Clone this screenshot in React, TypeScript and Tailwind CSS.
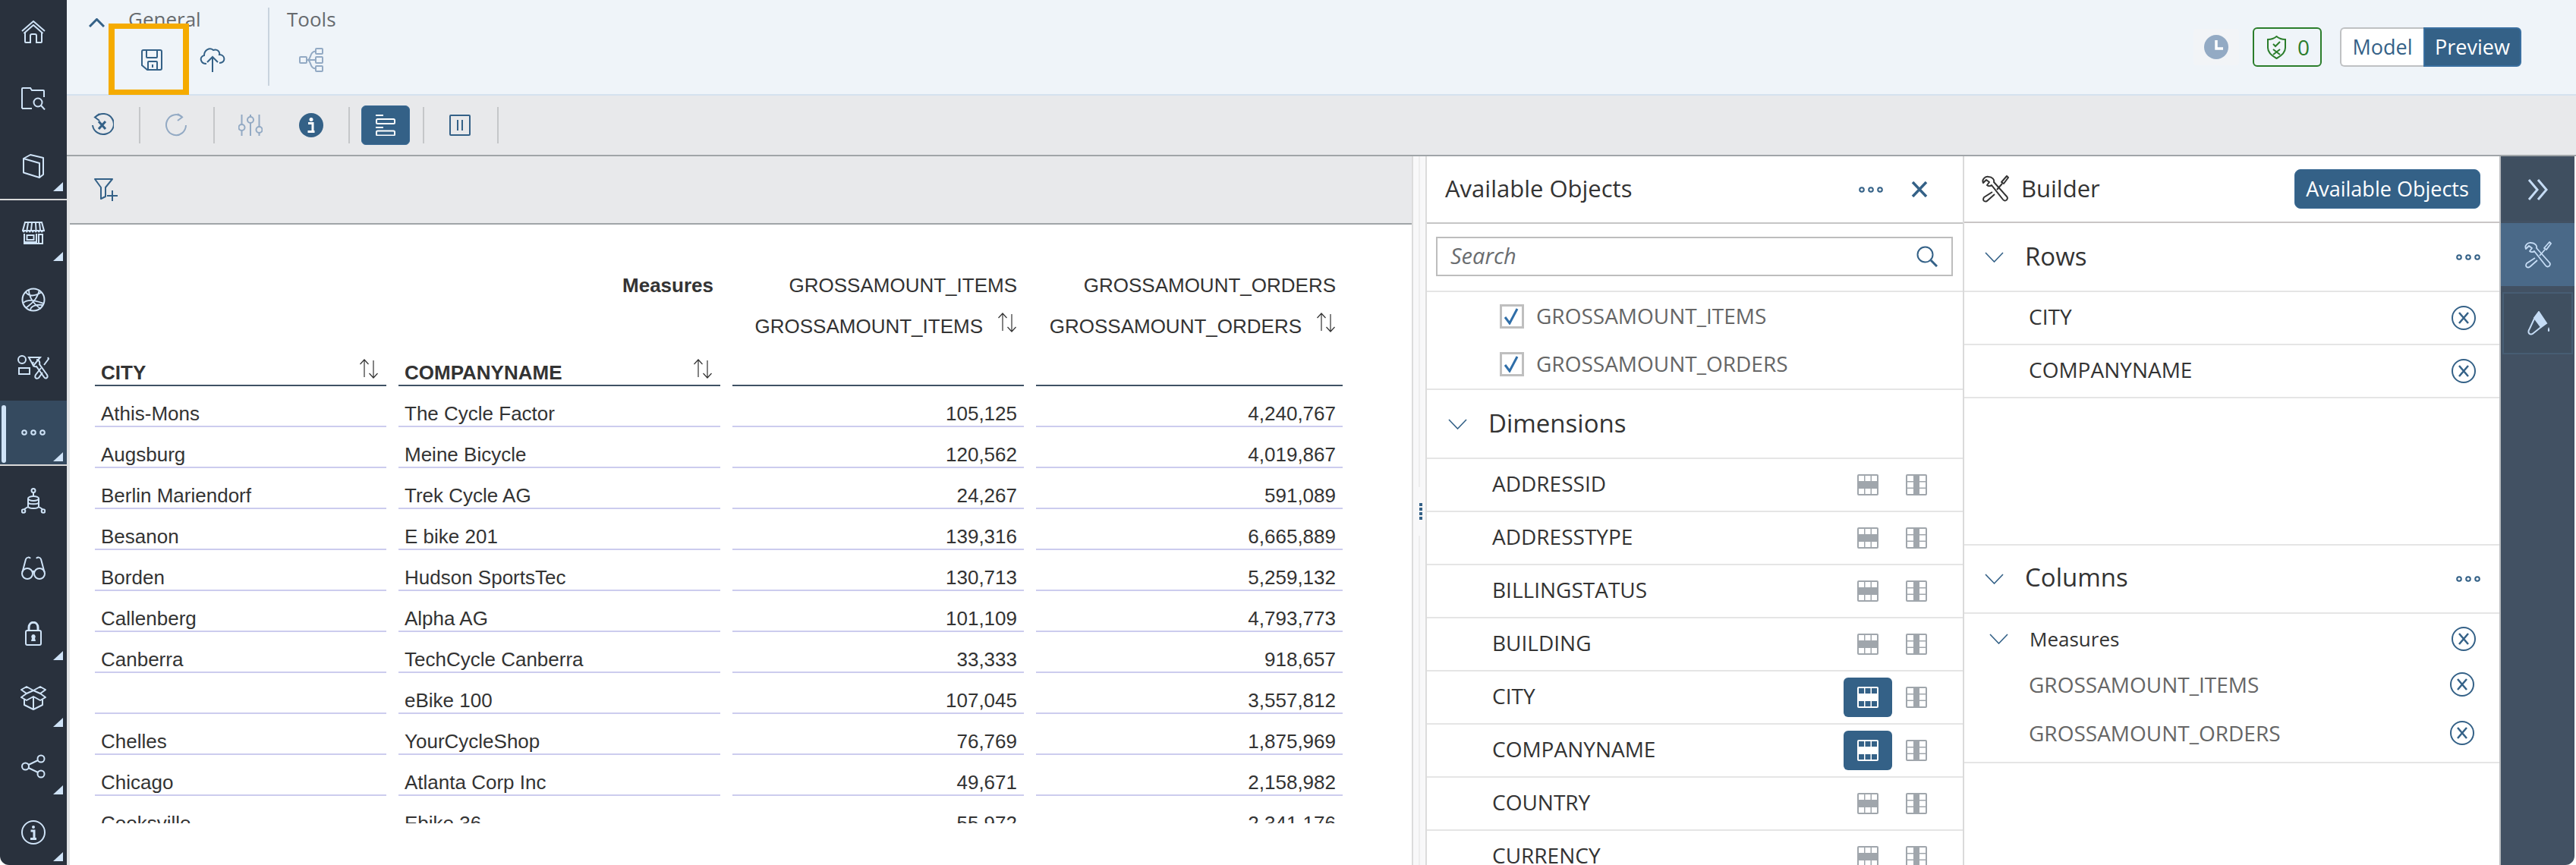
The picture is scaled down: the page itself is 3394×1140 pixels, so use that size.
import React from "react";

type P = { className?: string };

const Svg = ({ w, h, vb, className, children, sw = 2 }: { w: number; h: number; vb?: string; className?: string; children: React.ReactNode; sw?: number }) => (
  <svg width={w} height={h} viewBox={vb ?? `0 0 ${w} ${h}`} fill="none" stroke="currentColor" strokeWidth={sw} className={className}>
    {children}
  </svg>
);

const HomeI = () => (
  <Svg w={32} h={30}>
    <path d="M1 14 L16 1 L31 14 M3.500 17 L16 6 L28.500 17" strokeLinejoin="round" />
    <path d="M5 16 V28 Q5 29 6 29 H12 V20 Q12 18 14 18 H18 Q20 18 20 20 V29 H26 Q27 29 27 28 V16" />
  </Svg>
);
const FolderI = () => (
  <Svg w={32} h={30}>
    <path d="M1 28 V2 Q1 1 2 1 H12 L14 4 H29 Q30 4 30 5 V13 M1 28 H14" />
    <circle cx={22} cy={20} r={5.500} />
    <path d="M26 24 L31 29.500" />
  </Svg>
);
const BookI = () => (
  <Svg w={30} h={32}>
    <path d="M2 6 L23 12 V31 L2 24.500 Z" strokeLinejoin="round" />
    <path d="M2 6 L11 1 L28 5 V27 L23 31" strokeLinejoin="round" />
  </Svg>
);
const StoreI = () => (
  <Svg w={30} h={30}>
    <path d="M4 1 H26 L29 12 H1 Z" />
    <path d="M8 2 L6.500 11 M13 2 L12 11 M18 2 L18.500 11 M23 2 L24 11" />
    <path d="M1 13 H29" strokeDasharray="2.5 1.5" strokeWidth={2.500} />
    <path d="M3 16 V29 H27 V16 M3 27 H19 V16 M22 29 V17 H27" />
    <rect x={6.500} y={18} width={9} height={6} />
  </Svg>
);
const GlobeI = () => (
  <Svg w={32} h={32}>
    <circle cx={16} cy={16} r={14.500} />
    <path d="M6 6 C10 12 17 12 27 6 M3 20 C10 14 20 18 30 21 M10 3 C10 12 16 22 26 28 M6 27 C12 22 20 18 24 3 M12 30 C12 24 20 22 29 23" strokeWidth={1.800} />
  </Svg>
);
const ShapesToolI = () => (
  <Svg w={42} h={32}>
    <circle cx={6} cy={6} r={5} />
    <path d="M15 3 H30 L21 14 Z" />
    <rect x={2} y={17} width={14} height={8} />
    <path d="M21 9 C19 13 22 16 25 15 L35 29 C37 32 41 30 39 26 L29 12 C30 9 28 6 25 6" />
    <path d="M40 3 L41 5 L35 13 M31 17 L24 26 C22 30 25 32 28 30 L33 23" />
  </Svg>
);
const DotsI = ({ className }: P) => (
  <Svg w={32} h={10} className={className} sw={2}>
    <circle cx={4} cy={5} r={2.800} />
    <circle cx={16} cy={5} r={2.800} />
    <circle cx={28} cy={5} r={2.800} />
  </Svg>
);
const NetDbI = () => (
  <Svg w={32} h={34}>
    <circle cx={16} cy={3.500} r={2.500} />
    <path d="M16 6 V11" />
    <ellipse cx={16} cy={14} rx={7} ry={3} />
    <path d="M9 14 V24 C9 28 23 28 23 24 V14 M9 19 C9 22 23 22 23 19" />
    <path d="M9 25 L4 28 M23 25 L28 28" />
    <circle cx={3} cy={30.500} r={2.300} />
    <circle cx={29} cy={30.500} r={2.300} />
  </Svg>
);
const GlassesI = () => (
  <Svg w={32} h={32}>
    <circle cx={8} cy={23} r={7} />
    <circle cx={24} cy={23} r={7} />
    <path d="M15 22 C15 19 17 19 17 22 M1.500 21 L6 4 C7 1 11 1 12 3 M30.500 21 L26 4 C25 1 21 1 20 3" />
  </Svg>
);
const LockI = () => (
  <Svg w={22} h={32}>
    <path d="M5 13 V8 C5 -1 17 -1 17 8 V13" strokeWidth={3} />
    <rect x={1} y={12} width={20} height={19} rx={2} />
    <path d="M11 17 a3 3 0 0 1 2 5 l1 4 h-6 l1 -4 a3 3 0 0 1 2 -5 Z" fill="currentColor" stroke="none" />
  </Svg>
);
const BoxI = () => (
  <Svg w={34} h={32}>
    <path d="M8 1 L17 6 L26 1 L33 5 L26 10 L17 6 L8 10 L1 5 Z" strokeLinejoin="round" />
    <path d="M8 10 L1 15 L8 19 L17 14 L26 19 L33 15 L26 10 M17 14 L17 31 M5 18 V25 L17 31 L29 25 V18" strokeLinejoin="round" />
  </Svg>
);
const ShareI = () => (
  <Svg w={32} h={32}>
    <circle cx={5.500} cy={16} r={4.500} />
    <circle cx={26} cy={6} r={4.500} />
    <circle cx={26} cy={26} r={4.500} />
    <path d="M9.500 14 L22 8 M9.500 18 L22 24" />
  </Svg>
);
const InfoRailI = () => (
  <Svg w={32} h={32}>
    <circle cx={16} cy={16} r={15} />
    <circle cx={16} cy={9} r={2} fill="currentColor" stroke="none" />
    <path d="M12.500 14 H17 V24 M12 24.500 H20" strokeWidth={3} />
  </Svg>
);

const railItems = [
  { icon: <HomeI />, h: "h-[84px]", border: false, tri: "" },
  { icon: <FolderI />, h: "h-[92px]", border: false, tri: "" },
  { icon: <BookI />, h: "h-[86px]", border: true, tri: "bottom-[10px]" },
  { icon: <StoreI />, h: "h-[86px]", border: false, tri: "bottom-[6px]" },
  { icon: <GlobeI />, h: "h-[90px]", border: false, tri: "" },
  { icon: <ShapesToolI />, h: "h-[88px]", border: false, tri: "" },
  { icon: <DotsI />, h: "h-[84px]", border: true, tri: "bottom-[4px]", active: true },
  { icon: <NetDbI />, h: "h-[91px]", border: false, tri: "" },
  { icon: <GlassesI />, h: "h-[87px]", border: false, tri: "" },
  { icon: <LockI />, h: "h-[86px]", border: false, tri: "bottom-[8px]" },
  { icon: <BoxI />, h: "h-[84px]", border: false, tri: "bottom-[4px]" },
  { icon: <ShareI />, h: "h-[95px]", border: false, tri: "bottom-[10px]" },
  { icon: <InfoRailI />, h: "h-[80px]", border: false, tri: "bottom-[2px]" },
];

const Tri = ({ pos }: { pos: string }) => (
  <svg width={13} height={12} viewBox="0 0 13 12" className={`absolute right-[5px] ${pos} text-[#cfe3f7]`}>
    <polygon points="13,0 13,12 0,12" fill="currentColor" />
  </svg>
);

const LeftRail = () => (
  <div className="w-[88px] h-[1140px] shrink-0 bg-[#29313d] rounded-bl-[12px] text-[#cfe3f7] flex flex-col overflow-hidden">
    {railItems.map((it, i) => (
      <div
        key={i}
        className={`${it.h} ${it.border ? "border-b-2 border-[#d9d9d9] box-content" : ""} ${it.active ? "bg-[#354a5f]" : ""} shrink-0 relative flex items-center justify-center`}
      >
        {it.active && <div className="absolute left-[2px] top-[6px] bottom-[2px] w-[6px] rounded-[3px] bg-[#cfe3f7]" />}
        {it.icon}
        {it.tri && <Tri pos={it.tri} />}
      </div>
    ))}
  </div>
);

const ChevronDown = ({ className }: P) => (
  <svg width={25} height={14} viewBox="0 0 25 14" fill="none" stroke="currentColor" strokeWidth={1.600} className={`text-[#346187] ${className ?? ""}`}>
    <path d="M1 1 L12.500 13 L24 1" />
  </svg>
);

const TopBar = () => (
  <div className="relative h-[126px] shrink-0 bg-[#eff4f9] border-b-2 border-[#d5e2ef] flex items-start pl-[29px]">
    <div className="w-[52px] pt-[24px] shrink-0">
      <svg width={21} height={12} viewBox="0 0 21 12" fill="none" stroke="currentColor" strokeWidth={3} className="text-[#346187]">
        <path d="M1 11 L10.500 1.500 L20 11" />
      </svg>
    </div>
    <div className="w-[184px] shrink-0 pt-[10px]">
      <div className="text-[26px] leading-[30px] text-[#666a6e]">General</div>
      <div className="mt-[23px] h-[32px] flex items-center text-[#346187]">
        <svg width={28} height={28} viewBox="0 0 28 28" fill="none" stroke="currentColor" strokeWidth={2} className="ml-[17px]">
          <path d="M3 1 H25 Q27 1 27 3 V25 Q27 27 25 27 H8 L1 21 V3 Q1 1 3 1 Z" />
          <path d="M7 1 V10 Q7 11 8 11 H20 Q21 11 21 10 V1" />
          <path d="M9 27 V17 Q9 16 10 16 H20 Q21 16 21 17 V27 M15 20 V24" />
        </svg>
        <svg width={34} height={32} viewBox="0 0 34 32" fill="none" stroke="currentColor" strokeWidth={2} className="ml-[49px]">
          <path d="M9 21 C1 21 -1 12 6 10 C6 3 13 -1 18 3 C23 1 27 5 26 9 C34 9 35 20 26 20" />
          <path d="M17 32 V12 M10 19 L17 12 L24 19" />
        </svg>
      </div>
    </div>
    <div className="w-[2px] h-[103px] mt-[10px] bg-[#c8d3de] shrink-0" />
    <div className="pl-[23px] pt-[10px]">
      <div className="text-[26px] leading-[30px] text-[#666a6e]">Tools</div>
      <div className="mt-[23px] h-[32px] flex items-center text-[#93aac4]">
        <svg width={32} height={32} viewBox="0 0 32 32" fill="none" stroke="currentColor" strokeWidth={2} className="ml-[16px]">
          <rect x={1} y={12} width={9} height={8} rx={1} />
          <rect x={22} y={1} width={9} height={7} rx={1} />
          <rect x={22} y={12} width={9} height={8} rx={1} />
          <rect x={22} y={24} width={9} height={7} rx={1} />
          <path d="M10 16 H22 M12 16 C16 14 14 5 22 4.500 M12 16 C16 18 14 27 22 27.500" />
        </svg>
      </div>
    </div>
    <div className="ml-auto h-[124px] pr-[72px] flex items-center">
      <div className="w-[60px] h-[48px] rounded-[4px] bg-[#f2f4f7] flex items-center justify-center">
        <svg width={32} height={32} viewBox="0 0 32 32">
          <circle cx={16} cy={16} r={16} fill="#93aac4" />
          <path d="M16 7 V18 H25" fill="none" stroke="#fff" strokeWidth={3.500} />
        </svg>
      </div>
      <div className="ml-[18px] w-[91px] h-[52px] rounded-[6px] border-2 border-[#2b7d2b] flex items-center pl-[17px] text-[#2b7d2b]">
        <svg width={25} height={31} viewBox="0 0 25 31" fill="none" stroke="currentColor" strokeWidth={2}>
          <path d="M12.500 1 C9 4 5 5 1 5 V16 C1 23 7 27 12.500 30 C18 27 24 23 24 16 V5 C20 5 16 4 12.500 1 Z" />
          <path d="M8 11 L11 14 L17 8 M8 18 L17 25 M17 18 L8 25" />
        </svg>
        <span className="ml-[15px] text-[28px] leading-none">0</span>
      </div>
      <div className="ml-[24px] flex h-[52px] text-[27px]">
        <div className="w-[110px] border-2 border-r-0 border-[#bfc1c3] rounded-l-[6px] bg-white text-[#346187] flex items-center justify-center">Model</div>
        <div className="w-[129px] border-2 border-[#3a6fa0] rounded-r-[6px] bg-[#346187] text-white flex items-center justify-center">Preview</div>
      </div>
    </div>
    <div className="absolute left-[55px] top-[31px] w-[106px] h-[94px] border-x-[8px] border-y-[7px] border-[#f5ab00]" />
  </div>
);

const Sep = ({ className }: P) => <div className={`w-[2px] h-[48px] bg-[#c5c7c9] shrink-0 ${className ?? ""}`} />;

const Toolbar = () => (
  <div className="h-[80px] shrink-0 bg-[#e8e9eb] border-b-2 border-[#a0a5a8] flex items-center pl-[32px] text-[#346187]">
    <svg width={30} height={32} viewBox="0 0 30 32" fill="none" stroke="currentColor" strokeWidth={2}>
      <path d="M6 5 A14 13.500 0 1 1 2 16" />
      <path d="M11 1 L5 5.500 L11 10" />
      <path d="M10 11 L19 21 M19 11 L10 21" strokeWidth={3} />
    </svg>
    <Sep className="ml-[33px]" />
    <svg width={28} height={32} viewBox="0 0 28 32" fill="none" stroke="currentColor" strokeWidth={2} className="ml-[33px] text-[#93aac4]">
      <path d="M22 5 A13 13.500 0 1 0 27 16" />
      <path d="M16 1 L22 5.500 L16 10" />
    </svg>
    <Sep className="ml-[35px]" />
    <svg width={32} height={28} viewBox="0 0 32 28" fill="none" stroke="currentColor" strokeWidth={2} className="ml-[31px] text-[#93aac4]">
      <path d="M4.500 0 V13 M4.500 21 V28 M16 0 V3 M16 11 V28 M27.500 0 V16 M27.500 24 V28" />
      <circle cx={4.500} cy={17} r={4} />
      <circle cx={16} cy={7} r={4} />
      <circle cx={27.500} cy={20} r={4} />
    </svg>
    <svg width={32} height={32} viewBox="0 0 32 32" className="ml-[48px]">
      <circle cx={16} cy={16} r={16} fill="#346187" />
      <circle cx={16} cy={8.500} r={2.500} fill="#fff" />
      <path d="M12 13.500 H18 V24 M11.500 24.500 H20.500" fill="none" stroke="#fff" strokeWidth={3} />
    </svg>
    <Sep className="ml-[33px]" />
    <div className="ml-[15px] w-[64px] h-[52px] rounded-[6px] bg-[#346187] border border-[#3a6a94] flex items-center justify-center text-white">
      <svg width={26} height={28} viewBox="0 0 26 28" fill="none" stroke="currentColor" strokeWidth={2}>
        <path d="M0 1 H10 M0 17 H10" />
        <rect x={1} y={6} width={24} height={6} rx={1.500} />
        <rect x={1} y={21.500} width={24} height={6} rx={1.500} />
      </svg>
    </div>
    <Sep className="ml-[17px]" />
    <svg width={28} height={28} viewBox="0 0 28 28" fill="none" stroke="currentColor" strokeWidth={2} className="ml-[33px]">
      <rect x={1} y={1} width={26} height={26} rx={1} />
      <path d="M11 7 V21 M17 7 V21" />
    </svg>
    <Sep className="ml-[35px]" />
  </div>
);

const Sort = ({ className }: P) => (
  <svg width={26} height={26} viewBox="0 0 26 26" fill="none" stroke="#333" strokeWidth={1.200} className={className}>
    <path d="M7 24 V1 M1.500 7 L7 1 L12.500 7" />
    <path d="M19 2 V25 M13.500 19 L19 25 L24.500 19" />
  </svg>
);

const data: [string, string, string, string][] = [
  ["Athis-Mons", "The Cycle Factor", "105,125", "4,240,767"],
  ["Augsburg", "Meine Bicycle", "120,562", "4,019,867"],
  ["Berlin Mariendorf", "Trek Cycle AG", "24,267", "591,089"],
  ["Besanon", "E bike 201", "139,316", "6,665,889"],
  ["Borden", "Hudson SportsTec", "130,713", "5,259,132"],
  ["Callenberg", "Alpha AG", "101,109", "4,793,773"],
  ["Canberra", "TechCycle Canberra", "33,333", "918,657"],
  ["", "eBike 100", "107,045", "3,557,812"],
  ["Chelles", "YourCycleShop", "76,769", "1,875,969"],
  ["Chicago", "Atlanta Corp Inc", "49,671", "2,158,982"],
  ["Cooksville", "Ebike 36", "55,972", "2,341,176"],
];

const Head = ({ children, className }: { children?: React.ReactNode; className?: string }) => (
  <div className={`h-[54px] flex items-end justify-end pr-[9px] ${className ?? ""}`}>{children}</div>
);

const Table = () => (
  <div className="h-[789px] overflow-hidden pt-[42px] pl-[33px] font-['Liberation_Sans',Arial,sans-serif] text-[26px] leading-[32px] text-[#333]">
    <div className="grid grid-cols-[384px_424px_384px_404px] gap-x-[16px]">
      <Head />
      <Head><span className="font-bold">Measures</span></Head>
      <Head>GROSSAMOUNT_ITEMS</Head>
      <Head>GROSSAMOUNT_ORDERS</Head>
      <Head />
      <Head />
      <Head>GROSSAMOUNT_ITEMS<Sort className="ml-[19px] mb-[8px]" /></Head>
      <Head>GROSSAMOUNT_ORDERS<Sort className="ml-[19px] mb-[8px]" /></Head>
      <div className="h-[63px] border-b-2 border-[#3f5164] flex items-end justify-between pl-[8px] pr-[10px] font-bold">
        CITY<Sort className="mb-[8px]" />
      </div>
      <div className="h-[63px] border-b-2 border-[#3f5164] flex items-end justify-between pl-[8px] pr-[10px] font-bold">
        COMPANYNAME<Sort className="mb-[8px]" />
      </div>
      <div className="h-[63px] border-b-2 border-[#3f5164]" />
      <div className="h-[63px] border-b-2 border-[#3f5164]" />
      {data.map((r, i) => (
        <React.Fragment key={i}>
          <div className="h-[54px] border-b-2 border-[#ccccee] flex items-end pl-[8px]">{r[0]}</div>
          <div className="h-[54px] border-b-2 border-[#ccccee] flex items-end pl-[8px]">{r[1]}</div>
          <div className="h-[54px] border-b-2 border-[#ccccee] flex items-end justify-end pr-[9px]">{r[2]}</div>
          <div className="h-[54px] border-b-2 border-[#ccccee] flex items-end justify-end pr-[9px]">{r[3]}</div>
        </React.Fragment>
      ))}
    </div>
  </div>
);

const Content = () => (
  <div className="w-[1768px] shrink-0 flex flex-col bg-white">
    <div className="h-[90px] shrink-0 bg-[#e8e9eb] border-b-2 border-[#a0a5a8] flex items-center pl-[32px] text-[#346187]">
      <svg width={32} height={30} viewBox="0 0 32 30" fill="none" stroke="currentColor" strokeWidth={2}>
        <path d="M1 1 H24 L15 12 V24 L9 27 V12 Z" strokeLinejoin="round" />
        <path d="M24 16 V30 M17 23 H31" />
      </svg>
    </div>
    <Table />
  </div>
);

const Splitter = () => (
  <div className="relative w-[20px] shrink-0 bg-[#f8f8f9] border-x-2 border-[#dcdcdc]">
    <div className="absolute left-[7px] top-0 bottom-0 w-[2px] bg-[#eeeeee]" />
    <div className="absolute left-0 right-0 top-[436px] h-[64px] bg-[#f8f8f9] flex flex-col items-center justify-center gap-[2px] pl-[4px]">
      {[0, 1, 2, 3].map((i) => (
        <div key={i} className="w-[4px] h-[4px] bg-[#346187]" />
      ))}
    </div>
  </div>
);

const GridRow = () => (
  <svg width={28} height={28} viewBox="0 0 28 28" className="text-[#a0a6ac]">
    <rect width={28} height={28} rx={2} fill="currentColor" />
    {[2, 10.5, 19].map((x) => (
      <React.Fragment key={x}>
        <rect x={x} y={2} width={7} height={7} fill="#fff" />
        <rect x={x} y={19} width={7} height={7} fill="#fff" />
      </React.Fragment>
    ))}
  </svg>
);
const GridRowActive = () => (
  <svg width={28} height={28} viewBox="0 0 28 28">
    <rect width={28} height={28} rx={2} fill="#fff" />
    {[2, 10.5, 19].map((x) => (
      <React.Fragment key={x}>
        <rect x={x} y={2} width={7} height={7} fill="#346187" />
        <rect x={x} y={19} width={7} height={7} fill="#346187" />
      </React.Fragment>
    ))}
  </svg>
);
const GridCol = () => (
  <svg width={28} height={28} viewBox="0 0 28 28" className="text-[#a0a6ac]">
    <rect width={28} height={28} rx={2} fill="currentColor" />
    {[2, 10.5, 19].map((y) => (
      <React.Fragment key={y}>
        <rect x={2} y={y} width={8} height={7} fill="#fff" />
        <rect x={18} y={y} width={8} height={7} fill="#fff" />
      </React.Fragment>
    ))}
  </svg>
);

const dims: [string, boolean][] = [
  ["ADDRESSID", false],
  ["ADDRESSTYPE", false],
  ["BILLINGSTATUS", false],
  ["BUILDING", false],
  ["CITY", true],
  ["COMPANYNAME", true],
  ["COUNTRY", false],
  ["CURRENCY", false],
];

const Check = ({ label }: { label: string }) => (
  <div className="h-[64px] flex items-center pl-[96px]">
    <div className="w-[32px] h-[32px] border-[3px] border-[#bfbfbf] bg-white flex items-center justify-center">
      <svg width={20} height={22} viewBox="0 0 20 22" fill="none" stroke="#2f6ea8" strokeWidth={3}>
        <path d="M1 12 L7 20 L17 1" />
      </svg>
    </div>
    <span className="ml-[16px] pb-[2px] text-[28px] text-[#666]">{label}</span>
  </div>
);

const Available = () => (
  <div className="w-[708px] shrink-0 border-r-2 border-[#dadada] bg-white overflow-hidden text-[28px] text-[#333]">
    <div className="h-[89px] border-b-2 border-[#c5c5c5] flex items-center pl-[24px]">
      <span className="text-[31px] pb-[2px]">Available Objects</span>
      <DotsI className="ml-auto text-[#346187]" />
      <svg width={22} height={21} viewBox="0 0 22 21" fill="none" stroke="#346187" strokeWidth={3.500} className="ml-[37px] mr-[46px]">
        <path d="M2 1 L20 20 M20 1 L2 20" />
      </svg>
    </div>
    <div className="h-[90px] border-b-2 border-[#e5e5e5] pt-[17px] px-[12px]">
      <div className="w-[681px] h-[52px] border-2 border-[#bdbdbd] flex items-center pl-[17px] pr-[18px]">
        <span className="italic text-[29px] pb-[2px] text-[#6a6d70]">Search</span>
        <svg width={28} height={28} viewBox="0 0 28 28" fill="none" stroke="#346187" strokeWidth={2} className="ml-auto">
          <circle cx={11.500} cy={11.500} r={10} />
          <path d="M19 19 L27 27" strokeWidth={3} />
        </svg>
      </div>
    </div>
    <div className="h-[129px] border-b-2 border-[#e5e5e5] pb-[1px] flex flex-col justify-center">
      <Check label="GROSSAMOUNT_ITEMS" />
      <Check label="GROSSAMOUNT_ORDERS" />
    </div>
    <div className="h-[91px] border-b-2 border-[#e5e5e5] flex items-center pl-[28px]">
      <ChevronDown />
      <span className="ml-[28px] pb-[2px] text-[33px]">Dimensions</span>
    </div>
    {dims.map(([name, active]) => (
      <div key={name} className="h-[70px] border-b-2 border-[#e5e5e5] flex items-center pl-[86px] pr-[47px]">
        <span className="pb-[4px]">{name}</span>
        <div className={`ml-auto w-[64px] h-[52px] rounded-[6px] flex items-center justify-center ${active ? "bg-[#346187]" : ""}`}>
          {active ? <GridRowActive /> : <GridRow />}
        </div>
        <div className="ml-[18px]"><GridCol /></div>
      </div>
    ))}
  </div>
);

const ToolsI = ({ className, sw = 2 }: P & { sw?: number }) => (
  <svg width={36} height={36} viewBox="0 0 36 36" fill="none" stroke="currentColor" strokeWidth={sw} className={className}>
    <path d="M9 2 C4 1 0 6 2 10 L6 6 L10 9 L7 13 C9 15 12 14 13 13 L28 32 C31 36 36 31 33 28 L16 9 C17 6 14 2 9 2 Z" strokeLinejoin="round" />
    <path d="M33 1 L35 3 L29 11 L26 9 Z M27 11 L20 19 M14 22 L3 29 C0 34 5 36 8 33 L17 25" strokeLinejoin="round" />
  </svg>
);

const XCircle = ({ className }: P) => (
  <svg width={32} height={32} viewBox="0 0 32 32" fill="none" stroke="#346187" strokeWidth={2} className={className}>
    <circle cx={16} cy={16} r={15} />
    <path d="M10 9 L22 23 M22 9 L10 23" strokeWidth={2.500} />
  </svg>
);

const Builder = () => (
  <div className="w-[705px] shrink-0 bg-white overflow-hidden text-[28px] text-[#333]">
    <div className="h-[88px] border-b-2 border-[#c9c5c5] flex items-center pl-[23px] pr-[25px]">
      <ToolsI />
      <span className="ml-[16px] pb-[2px] text-[31px]">Builder</span>
      <div className="ml-auto w-[245px] h-[52px] rounded-[8px] bg-[#346187] border border-[#3a6a94] text-white text-[27px] flex items-center justify-center">Available Objects</div>
    </div>
    <div className="h-[91px] border-b-2 border-[#e5e5e5] flex items-center pl-[27px] pr-[25px]">
      <ChevronDown />
      <span className="ml-[28px] pb-[2px] text-[33px]">Rows</span>
      <DotsI className="ml-auto text-[#346187]" />
    </div>
    {["CITY", "COMPANYNAME"].map((n) => (
      <div key={n} className="h-[70px] border-b-2 border-[#e5e5e5] flex items-center pl-[85px] pr-[31px]">
        <span className="pb-[4px]">{n}</span>
        <XCircle className="ml-auto" />
      </div>
    ))}
    <div className="h-[192px]" />
    <div className="h-[92px] border-t-2 border-b-2 border-[#e5e5e5] flex items-center pl-[27px] pr-[25px]">
      <ChevronDown />
      <span className="ml-[28px] pb-[4px] text-[33px]">Columns</span>
      <DotsI className="ml-auto text-[#346187]" />
    </div>
    <div className="h-[61px] pt-[5px] flex items-center pl-[33px] pr-[31px]">
      <ChevronDown />
      <span className="ml-[28px] text-[26px]">Measures</span>
      <XCircle className="ml-auto" />
    </div>
    {["GROSSAMOUNT_ITEMS", "GROSSAMOUNT_ORDERS"].map((n) => (
      <div key={n} className="h-[64px] flex items-center pl-[85px] pr-[33px]">
        <span className="pb-[1px] text-[#666]">{n}</span>
        <XCircle className="ml-auto" />
      </div>
    ))}
    <div className="h-[8px] border-b-2 border-[#e5e5e5]" />
  </div>
);

const RightRail = () => (
  <div className="w-[99px] shrink-0 mr-[2px] bg-[#425163] border-l-2 border-[#b9bcbf] rounded-br-[12px] text-[#c5dcf5] flex flex-col pt-[3px]">
    <div className="mx-[2px] h-[82px] bg-[#3f4f60] border-2 border-[#3f4f60] flex items-center justify-center">
      <svg width={28} height={28} viewBox="0 0 28 28" fill="none" stroke="currentColor" strokeWidth={3}>
        <path d="M2 1 L13 14 L2 27 M14 1 L25 14 L14 27" />
      </svg>
    </div>
    <div className="mt-[3px] h-[83px] bg-[#4a6988] flex items-center justify-center">
      <ToolsI sw={1.800} />
    </div>
    <div className="mt-[8px] mx-[2px] h-[82px] bg-[#3f4f60] border-2 border-[#475d73] flex items-center justify-center">
      <svg width={32} height={32} viewBox="0 0 32 32" fill="none" stroke="currentColor" strokeWidth={2}>
        <path d="M17 1 L27 16 L20 21 L11 9 Z" fill="currentColor" />
        <path d="M11 10 L5 23 C1 29 6 33 10 29 L20 21" strokeLinejoin="round" />
        <path d="M30 21 C28 25 29 27 30 27 C31 27 32 25 30 21 Z" fill="currentColor" stroke="none" />
      </svg>
    </div>
  </div>
);

export default function App() {
  return (
    <div className="w-[3394px] h-[1140px] overflow-hidden bg-white flex font-['Open_Sans',sans-serif]">
      <LeftRail />
      <div className="flex-1 min-w-0 flex flex-col">
        <TopBar />
        <Toolbar />
        <div className="flex-1 min-h-0 flex">
          <div className="w-[4px] shrink-0 bg-[#e1e3e5]" />
          <Content />
          <Splitter />
          <Available />
          <Builder />
          <RightRail />
        </div>
      </div>
    </div>
  );
}
